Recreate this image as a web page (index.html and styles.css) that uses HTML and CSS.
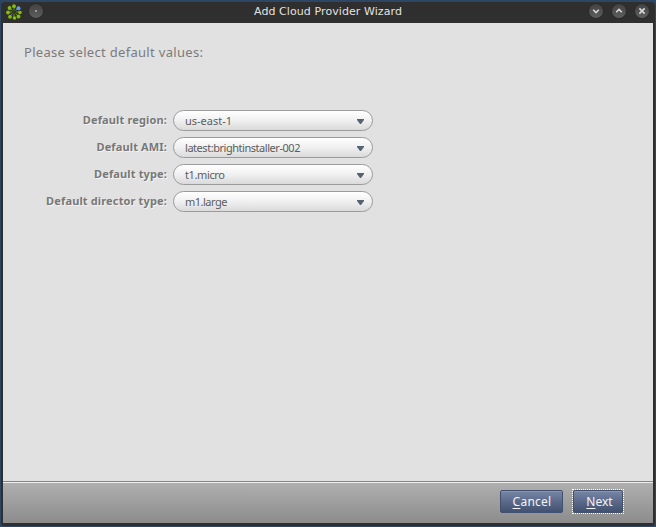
FILE: index.html
```html
<!DOCTYPE html>
<html lang="en">
<head>
<meta charset="utf-8">
<title>Add Cloud Provider Wizard</title>
<link rel="stylesheet" href="styles.css">
</head>
<body>
<div class="window">
  <header class="titlebar">
    <svg class="logo" width="16" height="16" viewBox="0 0 16 16">
      <g stroke="#72952a" stroke-width="1"><path d="M8 2v12M2 8h12M4 4l8 8M12 4l-8 8"/></g>
      <circle cx="8" cy="8" r="2.2" fill="#304019"/>
      <g fill="#83be0b"><circle cx="8" cy="2.2" r="1.9"/><circle cx="3.5" cy="4" r="1.9"/><circle cx="2" cy="8.5" r="1.9"/><circle cx="4" cy="12.8" r="1.9"/><circle cx="8.5" cy="14" r="1.8"/><circle cx="12.5" cy="12.5" r="1.9"/><circle cx="14" cy="8.5" r="1.8"/></g>
      <circle cx="12.5" cy="4.2" r="2" fill="#62a0dd"/>
    </svg>
    <span class="round pin"><svg width="14" height="14"><path d="M7 6v2" stroke="#aaa"/></svg></span>
    <h1 class="title"><span class="t-title">Add Cloud Provider Wizard</span></h1>
    <div class="controls">
      <span class="round"><svg width="14" height="14"><path d="M4.2 5.8L7 8.6l2.8-2.8"/></svg></span>
      <span class="round"><svg width="14" height="14"><path d="M4.2 8.2L7 5.4l2.8 2.8"/></svg></span>
      <span class="round"><svg width="14" height="14"><path d="M4.4 4.4l5.2 5.2M9.6 4.4L4.4 9.6"/></svg></span>
    </div>
  </header>
  <main class="content">
    <p class="heading">Please select default values:</p>
    <div class="form">
      <span class="label">Default region:</span>
      <div class="select"><span>us-east-1</span><svg width="7" height="5"><path d="M0 0h7v1L4 5H3L0 1z"/></svg></div>
      <span class="label">Default AMI:</span>
      <div class="select"><span class="v-ami">latest:brightinstaller-002</span><svg width="7" height="5"><path d="M0 0h7v1L4 5H3L0 1z"/></svg></div>
      <span class="label">Default type:</span>
      <div class="select"><span class="v-type">t1.micro</span><svg width="7" height="5"><path d="M0 0h7v1L4 5H3L0 1z"/></svg></div>
      <span class="label">Default director type:</span>
      <div class="select"><span class="v-director">m1.large</span><svg width="7" height="5"><path d="M0 0h7v1L4 5H3L0 1z"/></svg></div>
    </div>
  </main>
  <footer class="footer">
    <button class="btn cancel"><span><u>C</u>ancel</span></button>
    <div class="focus"><button class="btn next"><span><u>N</u>ext</span></button></div>
  </footer>
</div>
</body>
</html>
```
FILE: styles.css
```css
* { box-sizing: border-box; }
body { margin: 0; background: #2d4663; overflow: hidden; }
.window {
  width: 654px;
  height: 524px;
  margin: 2px 1px 1px;
  padding: 0 2px 3px;
  background: #2f2f2f;
  border-radius: 4px;
  display: flex;
  flex-direction: column;
}
.titlebar {
  height: 21px;
  flex: none;
  display: flex;
  align-items: center;
  padding: 0 4.5px 3px 3px;
}
.logo { display: block; margin-top: 1px; }
.round {
  width: 14px;
  height: 14px;
  border-radius: 50%;
  background: linear-gradient(#424242, #5e5e5e);
  box-shadow: 0 0 1px #171717;
}
.round svg { display: block; fill: none; stroke: #d8d8d8; stroke-width: 1.6; }
.pin { margin-left: 7px; }
.title {
  flex: 1;
  margin: 0;
  padding: 1px 0 0 211px;
  font: 11px/16px "DejaVu Sans", sans-serif;
  color: #e2e2e0;
  white-space: nowrap;
}
.t-title { letter-spacing: 0.08px; }
.controls { display: flex; gap: 9px; }
.content { flex: 1; background: #e1e1e1; }
.heading {
  margin: 0;
  padding: 19px 0 0 21px;
  font: 13px/20px "Noto Sans", sans-serif;
  letter-spacing: 0.31px;
  color: #7b7b7b;
}
.form {
  display: grid;
  grid-template-columns: 164px 200px;
  grid-auto-rows: 21px;
  gap: 6px;
  margin-top: 48px;
}
.label {
  text-align: right;
  font: bold 11px/20px "Noto Sans", sans-serif;
  letter-spacing: 0.14px;
  color: #787878;
  text-shadow: 1px 1px 0 #f3f3f3;
  white-space: nowrap;
}
.select {
  display: flex;
  align-items: center;
  justify-content: space-between;
  padding: 0 8px 0 11px;
  border: 1px solid #9b9b9b;
  border-radius: 11px;
  background: linear-gradient(#fff, #f0f0f0 50%, #dadada);
  font: 11px/19px "Noto Sans", sans-serif;
  color: #5c5c5c;
}
.select svg { fill: #566370; margin-top: 2px; }
.v-ami { letter-spacing: -0.46px; }
.v-type { letter-spacing: -0.38px; }
.v-director { letter-spacing: -0.5px; }
.footer {
  height: 42px;
  flex: none;
  display: flex;
  align-items: flex-start;
  justify-content: flex-end;
  gap: 9px;
  padding: 6px 29px 0 0;
  border-top: 1px solid #858585;
  background: linear-gradient(#b0b0b0, #8c8c8c);
  box-shadow: inset 0 1px #eee;
}
.btn {
  display: flex;
  align-items: center;
  justify-content: center;
  height: 23px;
  padding: 1px 0 0 1px;
  border: 1px solid #42506f;
  border-radius: 2px;
  background: linear-gradient(#7886a5, #5b6a8b 50%, #42516f);
  box-shadow: inset 0 1px #8995af;
  font: 12px/20px "Noto Sans", sans-serif;
  color: #f4f4f6;
}
.btn u { text-underline-offset: 2px; }
.cancel { width: 63px; margin-top: 2px; letter-spacing: 0.25px; }
.focus { border: 1px dotted #fff; margin-top: 1px; }
.next { width: 50px; padding-left: 3px; }
```
